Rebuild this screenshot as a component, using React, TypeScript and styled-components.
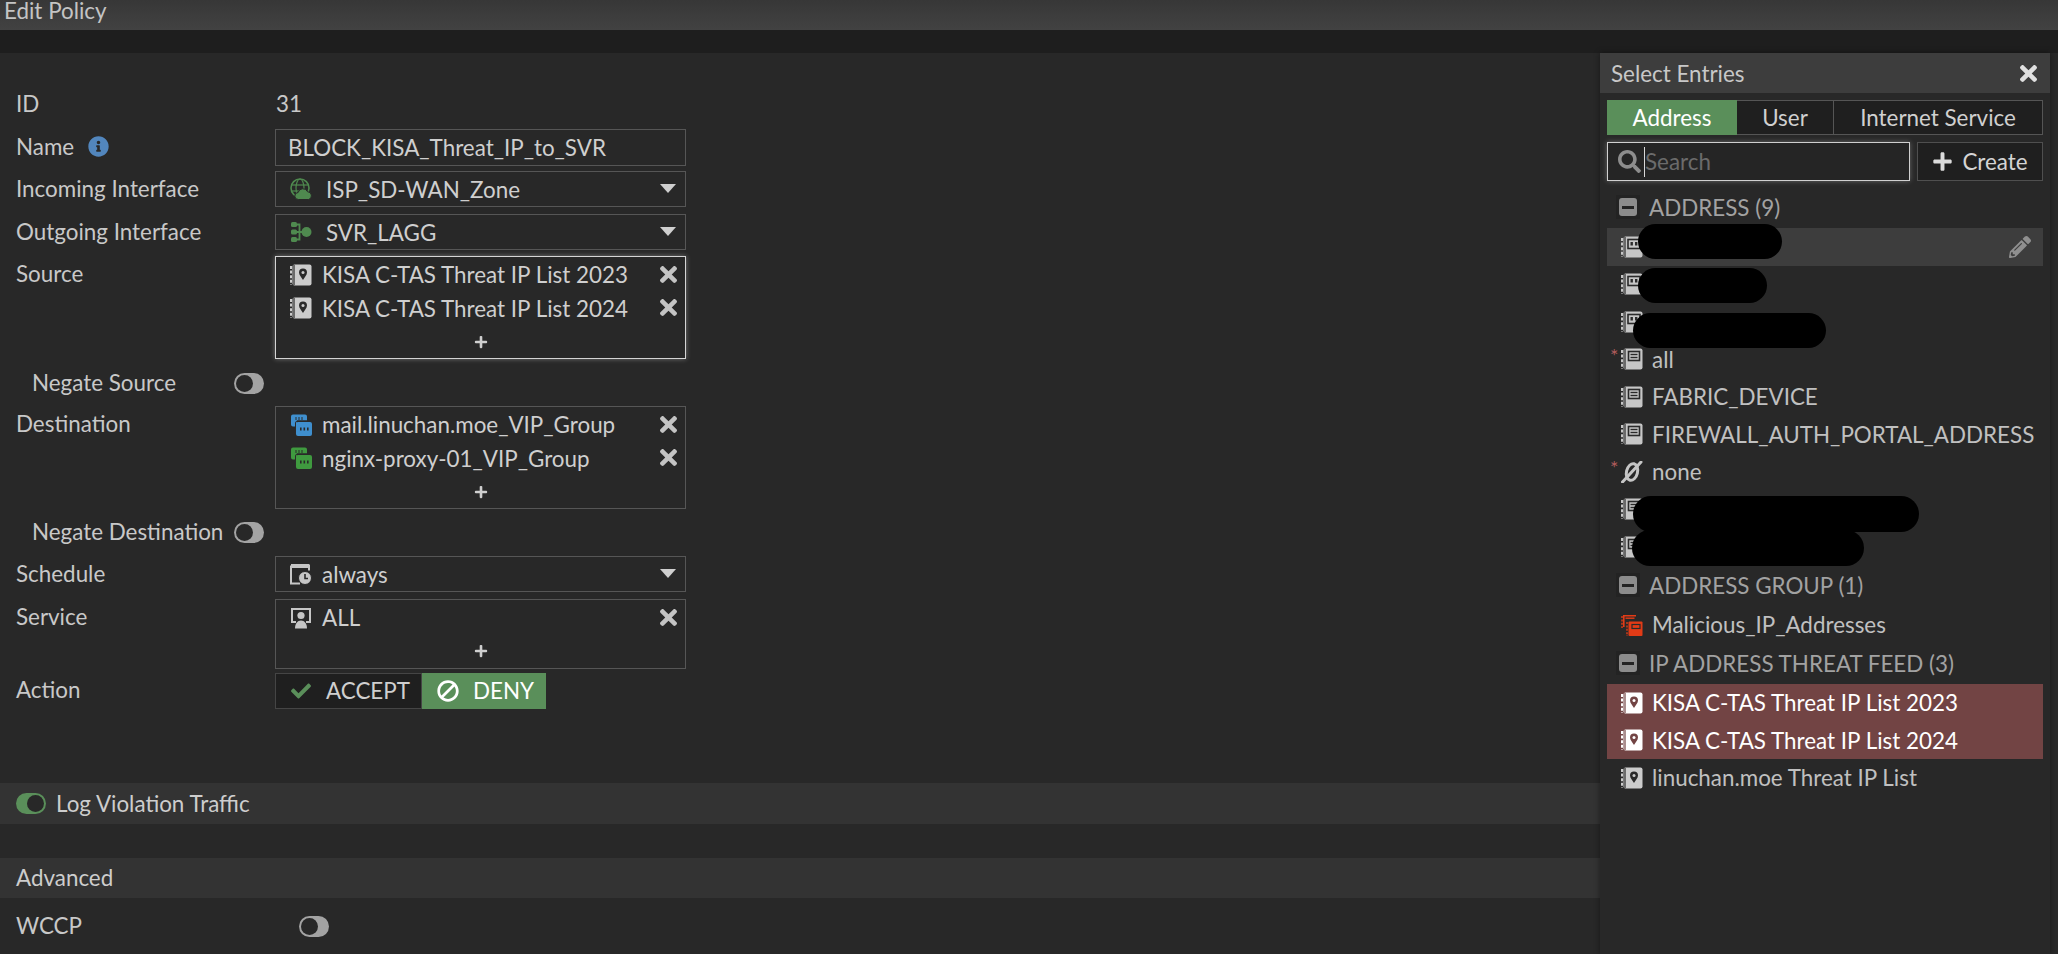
import { ReactNode } from "react";
import styled, { createGlobalStyle } from "styled-components";
import { FaBan, FaCheck, FaInfoCircle, FaPencilAlt, FaPlus, FaSearch, FaTimes } from "react-icons/fa";

const GlobalStyle = createGlobalStyle`
    html, body {
        margin: 0;
        padding: 0;
        background: #282828;
    }
    * {
        box-sizing: border-box;
    }
`;

const Page = styled.div`
    width: 2058px;
    height: 954px;
    overflow: hidden;
    display: flex;
    flex-direction: column;
    background: #282828;
    color: #cfcfcf;
    font-family: Lato, "Liberation Sans", sans-serif;
    font-size: 22.4px;
`;

const TopBar = styled.div`
    height: 30px;
    flex: none;
    padding-left: 4px;
    line-height: 22px;
    background: linear-gradient(#373737, #424242);
    color: #c4c4c4;
`;

const Band = styled.div`
    height: 23px;
    flex: none;
    background: #1e1e1e;
`;

const Content = styled.div`
    flex: 1;
    display: flex;
    min-height: 0;
`;

const Main = styled.div`
    flex: 1;
    padding-top: 33px;
`;

const Row = styled.div<{ $top?: number; $indent?: boolean }>`
    display: flex;
    align-items: flex-start;
    margin-top: ${(p) => p.$top ?? 0}px;
    padding-left: ${(p) => (p.$indent ? 32 : 16)}px;
`;

const Label = styled.div<{ $width?: number }>`
    width: ${(p) => p.$width ?? 259}px;
    height: 36px;
    flex: none;
    display: flex;
    align-items: center;
    gap: 14px;
    padding-bottom: 2px;
    color: #c8c8c8;
`;

const InfoIcon = styled(FaInfoCircle)`
    width: 21px;
    height: 21px;
    color: #5286bd;
`;

const Value = styled.div`
    height: 36px;
    line-height: 36px;
    padding-left: 1px;
    color: #c8c8c8;
`;

const TextInput = styled.input`
    width: 411px;
    height: 37px;
    padding: 0 12px 1px;
    border: 1px solid #565656;
    background: transparent;
    color: #cfcfcf;
    font: inherit;
    outline: none;
`;

const Select = styled.div`
    width: 411px;
    height: 36px;
    padding: 0 9px 0 14px;
    display: flex;
    align-items: center;
    border: 1px solid #565656;
`;

const SelectText = styled.span<{ $gap: number }>`
    flex: 1;
    margin-left: ${(p) => p.$gap}px;
`;

const Caret = styled.span`
    width: 0;
    height: 0;
    margin-bottom: 1px;
    border-left: 8px solid transparent;
    border-right: 8px solid transparent;
    border-top: 9px solid #cfcfcf;
`;

const MultiBox = styled.div<{ $focused?: boolean }>`
    width: 411px;
    padding: 1px 8px 0 14px;
    border: 1px solid ${(p) => (p.$focused ? "#d4d4d4" : "#565656")};
    box-shadow: ${(p) => (p.$focused ? "0 0 5px rgba(255, 255, 255, 0.35)" : "none")};
`;

const Entry = styled.div`
    height: 33.5px;
    display: flex;
    align-items: center;
    gap: 10px;
`;

const EntryText = styled.span`
    flex: 1;
`;

const RemoveIcon = styled(FaTimes)`
    width: 17px;
    height: 25px;
    margin-bottom: 1px;
    color: #c4c4c4;
`;

const AddRow = styled.div`
    height: 33px;
    display: flex;
    align-items: center;
    justify-content: center;
    padding-right: 6px;
    color: #cfcfcf;
    font-size: 14px;
`;

const Toggle = styled.span<{ $on?: boolean }>`
    width: 30px;
    height: 21px;
    flex: none;
    display: inline-flex;
    justify-content: ${(p) => (p.$on ? "flex-end" : "flex-start")};
    padding: 2px;
    border-radius: 11px;
    background: ${(p) => (p.$on ? "#5a8f5a" : "#a3a3a3")};
    &::before {
        content: "";
        width: 17px;
        height: 17px;
        border-radius: 50%;
        background: #282828;
    }
`;

const ToggleCell = styled.div`
    height: 36px;
    display: flex;
    align-items: center;
`;

const ActionGroup = styled.div`
    display: flex;
    height: 36px;
`;

const ActionButton = styled.div<{ $active?: boolean }>`
    height: 36px;
    display: flex;
    align-items: center;
    gap: 14px;
    padding-left: 14px;
    width: ${(p) => (p.$active ? 124 : 147)}px;
    background: ${(p) => (p.$active ? "#5a8f5a" : "#1f1f1f")};
    border: 1px solid ${(p) => (p.$active ? "#5a8f5a" : "#454545")};
    color: ${(p) => (p.$active ? "#ffffff" : "#cfcfcf")};
`;

const CheckIcon = styled(FaCheck)`
    width: 22px;
    height: 20px;
    color: #5a8f5a;
`;

const BanIcon = styled(FaBan)`
    width: 22px;
    height: 22px;
    color: #ffffff;
    transform: scaleX(-1);
`;

const SectionBar = styled.div<{ $top: number; $height: number }>`
    height: ${(p) => p.$height}px;
    margin-top: ${(p) => p.$top}px;
    display: flex;
    align-items: center;
    gap: 10px;
    padding-left: 16px;
    background: #333333;
    color: #cdcdcd;
`;

const Panel = styled.div`
    width: 450px;
    flex: none;
    margin-right: 8px;
    display: flex;
    flex-direction: column;
    background: #282828;
    box-shadow: 0 0 6px rgba(0, 0, 0, 0.45);
`;

const PanelHeader = styled.div`
    height: 40px;
    flex: none;
    display: flex;
    align-items: center;
    justify-content: space-between;
    padding: 0 13px 0 11px;
    background: #3d3d3d;
    color: #c8c8c8;
`;

const CloseIcon = styled(FaTimes)`
    width: 17px;
    height: 25px;
    color: #e0e0e0;
`;

const PanelBody = styled.div`
    padding: 7px 7px 0;
`;

const Tabs = styled.div`
    height: 35px;
    display: flex;
`;

const Tab = styled.div<{ $width: number; $active?: boolean }>`
    width: ${(p) => p.$width}px;
    display: flex;
    align-items: center;
    justify-content: center;
    background: ${(p) => (p.$active ? "#5a8f5a" : "#1f1f1f")};
    border: 1px solid ${(p) => (p.$active ? "#5a8f5a" : "#555555")};
    border-left-width: ${(p) => (p.$active ? 1 : 0)}px;
    color: ${(p) => (p.$active ? "#ffffff" : "#d0d0d0")};
`;

const SearchRow = styled.div`
    height: 39px;
    margin-top: 7px;
    display: flex;
    gap: 7px;
`;

const SearchBox = styled.div`
    width: 303px;
    display: flex;
    align-items: center;
    padding-left: 10px;
    border: 1px solid #d0d0d0;
    box-shadow: 0 0 5px rgba(255, 255, 255, 0.3);
    background: #252525;
`;

const SearchGlyph = styled(FaSearch)`
    width: 23px;
    height: 23px;
    flex: none;
    margin-right: 3px;
    color: #8d8d8d;
`;

const TextCaret = styled.span`
    width: 1px;
    height: 30px;
    flex: none;
    background: #d8d8d8;
`;

const SearchInput = styled.input`
    flex: 1;
    min-width: 0;
    padding: 0;
    border: none;
    outline: none;
    background: transparent;
    color: #cfcfcf;
    font: inherit;
    &::placeholder {
        color: #6b6b6b;
        opacity: 1;
    }
`;

const CreateButton = styled.div`
    width: 126px;
    display: flex;
    align-items: center;
    justify-content: center;
    gap: 9px;
    border: 1px solid #4f4f4f;
    background: #1f1f1f;
    color: #d4d4d4;
`;

const CreateIcon = styled(FaPlus)`
    width: 21px;
    height: 21px;
    color: #dcdcdc;
`;

const EntryList = styled.div`
    margin-top: 6.5px;
`;

const GroupHeader = styled.div`
    height: 40.5px;
    display: flex;
    align-items: center;
    padding: 0 0 1px 9px;
    color: #a2a2a2;
`;

const Collapse = styled.span`
    width: 24px;
    height: 24px;
    flex: none;
    margin-right: 9px;
    padding: 3px;
    background: #232323;
    display: flex;
`;

const CollapseInner = styled.span`
    flex: 1;
    display: flex;
    align-items: center;
    justify-content: center;
    border-radius: 3px;
    background: #8c8c8c;
    &::before {
        content: "";
        width: 12px;
        height: 3px;
        background: #232323;
    }
`;

const ListRow = styled.div<{ $kind?: "hover" | "selected" }>`
    position: relative;
    height: 37.5px;
    display: flex;
    align-items: center;
    gap: 9px;
    padding-left: 14px;
    background: ${(p) =>
        p.$kind === "hover" ? "#3d3d3d" : p.$kind === "selected" ? "#724444" : "transparent"};
    color: ${(p) => (p.$kind === "selected" ? "#ffffff" : "#c0c0c0")};
`;

const ListText = styled.span`
    flex: 1;
`;

const EditIcon = styled(FaPencilAlt)`
    width: 22px;
    height: 22px;
    margin-right: 12px;
    color: #8f8f8f;
`;

const Required = styled.span`
    position: absolute;
    left: 3px;
    top: 4px;
    color: #b05c5c;
    font-size: 20px;
    line-height: 20px;
`;

const Redaction = styled.span<{ $x: number; $y: number; $w: number; $h: number }>`
    position: absolute;
    left: ${(p) => p.$x}px;
    top: ${(p) => p.$y}px;
    width: ${(p) => p.$w}px;
    height: ${(p) => p.$h}px;
    border-radius: 18px;
    background: #000000;
    z-index: 1;
`;

const IconSvg = styled.svg`
    width: 22px;
    height: 22px;
    flex: none;
    display: block;
`;

function Notebook({ color, ink, children }: { color: string; ink: string; children: ReactNode }) {
    return (
        <IconSvg viewBox="0 0 22 22">
            <rect x="2.5" y="0.5" width="19" height="21" rx="2" fill={color} />
            <line x1="4" y1="1" x2="4" y2="21" stroke={ink} strokeWidth="1.2" />
            <line x1="1" y1="2" x2="1" y2="21" stroke={color} strokeWidth="2" strokeDasharray="3 1.6" />
            <g fill={ink} stroke={ink}>
                {children}
            </g>
        </IconSvg>
    );
}

const ink = "#2a2a2a";

function ThreatIcon({ color = "#cccccc", pin = "#2a2a2a" }: { color?: string; pin?: string }) {
    return (
        <Notebook color={color} ink={pin}>
            <path
                d="M13 4.5a4 4 0 0 1 4 4c0 2.6-2.7 5-4 7.5-1.3-2.5-4-4.9-4-7.5a4 4 0 0 1 4-4z"
                stroke="none"
            />
            <circle cx="13" cy="8.5" r="1.5" fill={color} stroke="none" />
        </Notebook>
    );
}

function AddressIcon() {
    return (
        <Notebook color="#c6c6c6" ink={ink}>
            <rect x="7.5" y="3.5" width="11" height="9" fill="none" strokeWidth="1.6" />
            <line x1="9.5" y1="6.5" x2="16.5" y2="6.5" strokeWidth="1.4" />
            <line x1="9.5" y1="9.5" x2="16.5" y2="9.5" strokeWidth="1.4" />
        </Notebook>
    );
}

function PortIcon() {
    return (
        <Notebook color="#c6c6c6" ink={ink}>
            <rect x="7" y="3.5" width="12" height="9" fill="none" strokeWidth="1.6" />
            <rect x="9.5" y="6" width="2.4" height="3.5" stroke="none" />
            <rect x="14" y="6" width="2.4" height="3.5" stroke="none" />
        </Notebook>
    );
}

function NoneIcon() {
    return (
        <IconSvg viewBox="0 0 22 22">
            <ellipse
                cx="11"
                cy="11"
                rx="5.5"
                ry="8.5"
                transform="rotate(14 11 11)"
                fill="none"
                stroke="#c6c6c6"
                strokeWidth="3"
            />
            <line x1="1.5" y1="21" x2="20" y2="1" stroke="#c6c6c6" strokeWidth="3" strokeLinecap="round" />
        </IconSvg>
    );
}

function GroupIcon({ color }: { color: string }) {
    return (
        <IconSvg viewBox="0 0 22 22">
            <path d="M1 2.5a2 2 0 0 1 2-2h12a2 2 0 0 1 2 2v4H7v6H3a2 2 0 0 1-2-2z" fill={color} />
            <g stroke="#2a2a2a" strokeWidth="1">
                <line x1="6" y1="3" x2="6" y2="6" />
                <line x1="9" y1="3" x2="9" y2="6" />
                <line x1="12" y1="3" x2="12" y2="6" />
            </g>
            <rect x="6" y="8" width="16" height="14" rx="2" fill={color} />
            <path d="M5.5 20V9a2 2 0 0 1 2-2h13" fill="none" stroke="#2a2a2a" strokeWidth="1" />
            <g fill="#2a2a2a">
                <rect x="10" y="13.5" width="1.6" height="3" />
                <rect x="13.5" y="13.5" width="1.6" height="3" />
                <rect x="17" y="13.5" width="1.6" height="3" />
            </g>
        </IconSvg>
    );
}

function RedGroupIcon() {
    const red = "#e23b16";
    return (
        <IconSvg viewBox="0 0 22 22">
            <path d="M2 1h13v1.6H3.6V13H2z" fill={red} />
            <line x1="1" y1="2" x2="1" y2="14" stroke={red} strokeWidth="1.4" strokeDasharray="2 1.4" />
            <rect x="7.5" y="7.5" width="14" height="14.5" rx="1" fill={red} />
            <line x1="6" y1="8" x2="6" y2="22" stroke={red} strokeWidth="1.4" strokeDasharray="2 1.4" />
            <rect x="11" y="10.5" width="8" height="4" fill="none" stroke="#2a2a2a" strokeWidth="1.2" />
            <rect x="4.5" y="3.5" width="9" height="1.4" fill={red} />
        </IconSvg>
    );
}

function ZoneIcon() {
    const green = "#4f8a4f";
    return (
        <IconSvg viewBox="0 0 22 22">
            <circle cx="10" cy="10" r="9" fill="none" stroke={green} strokeWidth="1.6" />
            <ellipse cx="10" cy="10" rx="4" ry="9" fill="none" stroke={green} strokeWidth="1.2" />
            <line x1="1.5" y1="7" x2="18.5" y2="7" stroke={green} strokeWidth="1.2" />
            <line x1="1.5" y1="13" x2="12" y2="13" stroke={green} strokeWidth="1.2" />
            <path
                d="M8.5 21.5a3.5 3.5 0 0 1-.4-7 5 5 0 0 1 9.4-.8 4 4 0 0 1 1.2 7.8z"
                fill={green}
                stroke="#282828"
                strokeWidth="1"
            />
        </IconSvg>
    );
}

function LaggIcon() {
    const green = "#4f8a4f";
    return (
        <IconSvg viewBox="0 0 22 22">
            <rect x="1" y="1" width="6" height="5" rx="1.5" fill={green} />
            <rect x="1" y="8.5" width="6" height="5" rx="1.5" fill={green} />
            <rect x="1" y="16" width="6" height="5" rx="1.5" fill={green} />
            <path d="M7 3.5h2.5v15H7M7 11h8" fill="none" stroke={green} strokeWidth="1.8" />
            <circle cx="16.5" cy="11" r="5" fill={green} />
        </IconSvg>
    );
}

function ScheduleIcon() {
    return (
        <IconSvg viewBox="0 0 22 22">
            <path d="M1 2.5h18v5M1 2.5v18h9" fill="none" stroke="#c6c6c6" strokeWidth="2" />
            <rect x="1" y="1" width="18" height="4" fill="#c6c6c6" />
            <circle cx="15" cy="15" r="6.5" fill="#c6c6c6" stroke="#282828" strokeWidth="1" />
            <path d="M15 11v4.5h3" fill="none" stroke="#282828" strokeWidth="1.6" />
        </IconSvg>
    );
}

function ServiceIcon() {
    return (
        <IconSvg viewBox="0 0 22 22">
            <path d="M1 1h20v15h-5v-2h3V3H3v11h3v2H1z" fill="#c6c6c6" />
            <circle cx="11" cy="8.5" r="3.6" fill="#c6c6c6" />
            <path d="M5 21.5c0-5 2.5-8 6-8s6 3 6 8z" fill="#c6c6c6" />
        </IconSvg>
    );
}

const addressRows = [
    { icon: <PortIcon />, hover: true, blot: { x: 31, y: -4, w: 144, h: 35 } },
    { icon: <PortIcon />, blot: { x: 31, y: 2.5, w: 129, h: 35 } },
    { icon: <PortIcon />, blot: { x: 26, y: 10, w: 193, h: 35 } },
    { icon: <AddressIcon />, text: "all", required: true },
    { icon: <AddressIcon />, text: "FABRIC_DEVICE" },
    { icon: <AddressIcon />, text: "FIREWALL_AUTH_PORTAL_ADDRESS" },
    { icon: <NoneIcon />, text: "none", required: true },
    { icon: <AddressIcon />, blot: { x: 26, y: 5.5, w: 286, h: 36 } },
    { icon: <AddressIcon />, blot: { x: 25, y: 2, w: 232, h: 36 } },
];

function App() {
    return (
        <Page>
            <GlobalStyle />
            <TopBar>Edit Policy</TopBar>
            <Band />
            <Content>
                <Main>
                    <Row>
                        <Label>ID</Label>
                        <Value>31</Value>
                    </Row>
                    <Row $top={7}>
                        <Label>
                            Name
                            <InfoIcon />
                        </Label>
                        <TextInput readOnly defaultValue="BLOCK_KISA_Threat_IP_to_SVR" />
                    </Row>
                    <Row $top={5}>
                        <Label>Incoming Interface</Label>
                        <Select>
                            <ZoneIcon />
                            <SelectText $gap={14}>ISP_SD-WAN_Zone</SelectText>
                            <Caret />
                        </Select>
                    </Row>
                    <Row $top={7}>
                        <Label>Outgoing Interface</Label>
                        <Select>
                            <LaggIcon />
                            <SelectText $gap={14}>SVR_LAGG</SelectText>
                            <Caret />
                        </Select>
                    </Row>
                    <Row $top={6}>
                        <Label>Source</Label>
                        <MultiBox $focused>
                            <Entry>
                                <ThreatIcon />
                                <EntryText>KISA C-TAS Threat IP List 2023</EntryText>
                                <RemoveIcon />
                            </Entry>
                            <Entry>
                                <ThreatIcon />
                                <EntryText>KISA C-TAS Threat IP List 2024</EntryText>
                                <RemoveIcon />
                            </Entry>
                            <AddRow>
                                <FaPlus />
                            </AddRow>
                        </MultiBox>
                    </Row>
                    <Row $top={6} $indent>
                        <Label $width={202}>Negate Source</Label>
                        <ToggleCell>
                            <Toggle />
                        </ToggleCell>
                    </Row>
                    <Row $top={5}>
                        <Label>Destination</Label>
                        <MultiBox>
                            <Entry>
                                <GroupIcon color="#3f8fce" />
                                <EntryText>mail.linuchan.moe_VIP_Group</EntryText>
                                <RemoveIcon />
                            </Entry>
                            <Entry>
                                <GroupIcon color="#3f9a3f" />
                                <EntryText>nginx-proxy-01_VIP_Group</EntryText>
                                <RemoveIcon />
                            </Entry>
                            <AddRow>
                                <FaPlus />
                            </AddRow>
                        </MultiBox>
                    </Row>
                    <Row $top={5} $indent>
                        <Label $width={202}>Negate Destination</Label>
                        <ToggleCell>
                            <Toggle />
                        </ToggleCell>
                    </Row>
                    <Row $top={6}>
                        <Label>Schedule</Label>
                        <Select>
                            <ScheduleIcon />
                            <SelectText $gap={10}>always</SelectText>
                            <Caret />
                        </Select>
                    </Row>
                    <Row $top={7}>
                        <Label>Service</Label>
                        <MultiBox>
                            <Entry>
                                <ServiceIcon />
                                <EntryText>ALL</EntryText>
                                <RemoveIcon />
                            </Entry>
                            <AddRow>
                                <FaPlus />
                            </AddRow>
                        </MultiBox>
                    </Row>
                    <Row $top={4}>
                        <Label>Action</Label>
                        <ActionGroup>
                            <ActionButton>
                                <CheckIcon />
                                ACCEPT
                            </ActionButton>
                            <ActionButton $active>
                                <BanIcon />
                                DENY
                            </ActionButton>
                        </ActionGroup>
                    </Row>
                    <SectionBar $top={74} $height={41}>
                        <Toggle $on />
                        Log Violation Traffic
                    </SectionBar>
                    <SectionBar $top={34} $height={40}>
                        Advanced
                    </SectionBar>
                    <Row $top={11}>
                        <Label $width={283}>WCCP</Label>
                        <ToggleCell>
                            <Toggle />
                        </ToggleCell>
                    </Row>
                </Main>
                <Panel>
                    <PanelHeader>
                        Select Entries
                        <CloseIcon />
                    </PanelHeader>
                    <PanelBody>
                        <Tabs>
                            <Tab $width={130} $active>
                                Address
                            </Tab>
                            <Tab $width={97}>User</Tab>
                            <Tab $width={209}>Internet Service</Tab>
                        </Tabs>
                        <SearchRow>
                            <SearchBox>
                                <SearchGlyph />
                                <TextCaret />
                                <SearchInput placeholder="Search" />
                            </SearchBox>
                            <CreateButton>
                                <CreateIcon />
                                Create
                            </CreateButton>
                        </SearchRow>
                        <EntryList>
                            <GroupHeader>
                                <Collapse>
                                    <CollapseInner />
                                </Collapse>
                                ADDRESS (9)
                            </GroupHeader>
                            {addressRows.map((row, i) => (
                                <ListRow key={i} $kind={row.hover ? "hover" : undefined}>
                                    {row.required && <Required>*</Required>}
                                    {row.icon}
                                    <ListText>{row.text}</ListText>
                                    {row.hover && <EditIcon />}
                                    {row.blot && (
                                        <Redaction $x={row.blot.x} $y={row.blot.y} $w={row.blot.w} $h={row.blot.h} />
                                    )}
                                </ListRow>
                            ))}
                            <GroupHeader>
                                <Collapse>
                                    <CollapseInner />
                                </Collapse>
                                ADDRESS GROUP (1)
                            </GroupHeader>
                            <ListRow>
                                <RedGroupIcon />
                                <ListText>Malicious_IP_Addresses</ListText>
                            </ListRow>
                            <GroupHeader>
                                <Collapse>
                                    <CollapseInner />
                                </Collapse>
                                IP ADDRESS THREAT FEED (3)
                            </GroupHeader>
                            <ListRow $kind="selected">
                                <ThreatIcon color="#ffffff" pin="#724444" />
                                <ListText>KISA C-TAS Threat IP List 2023</ListText>
                            </ListRow>
                            <ListRow $kind="selected">
                                <ThreatIcon color="#ffffff" pin="#724444" />
                                <ListText>KISA C-TAS Threat IP List 2024</ListText>
                            </ListRow>
                            <ListRow>
                                <ThreatIcon />
                                <ListText>linuchan.moe Threat IP List</ListText>
                            </ListRow>
                        </EntryList>
                    </PanelBody>
                </Panel>
            </Content>
        </Page>
    );
}

export default App;
